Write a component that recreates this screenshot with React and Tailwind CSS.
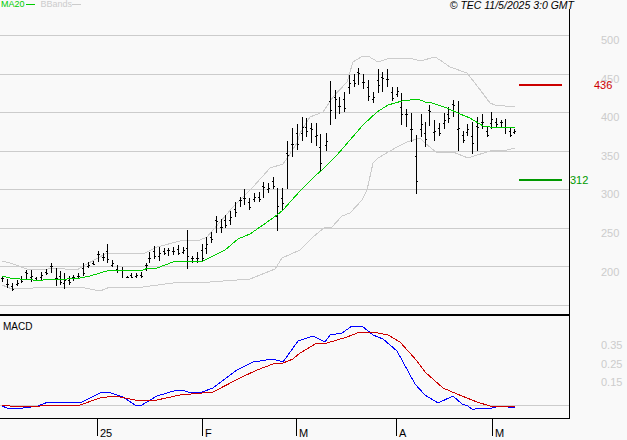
const FONT = "font-['Liberation_Sans',Arial,sans-serif]";

// x, high, low for every daily bar (page pixels)
const bars = [
    [2, 276, 282], [7, 279, 288], [12, 283, 291], [17, 280, 286], [21, 276, 283], [26, 270, 279], [31, 270, 282],
    [36, 277, 281], [41, 272, 280], [46, 269, 275], [51, 263, 273], [56, 268, 286], [60, 271, 285], [64, 273, 289],
    [69, 276, 285], [73, 275, 281], [78, 273, 278], [83, 263, 276], [88, 262, 268], [93, 261, 265], [98, 251, 262],
    [103, 253, 261], [107, 244, 263], [112, 260, 267], [117, 265, 273], [122, 267, 278], [127, 276, 278],
    [131, 273, 278], [136, 273, 278], [141, 272, 278], [146, 263, 271], [149, 252, 263], [154, 246, 259],
    [159, 247, 261], [164, 248, 255], [168, 248, 256], [173, 247, 255], [178, 245, 255], [183, 247, 254],
    [187, 230, 269], [192, 256, 263], [197, 252, 263], [202, 244, 262], [206, 237, 254], [211, 232, 243],
    [216, 216, 233], [221, 219, 233], [225, 215, 228], [230, 211, 225], [235, 202, 217], [240, 197, 207],
    [244, 189, 205], [249, 198, 210], [254, 193, 202], [259, 192, 202], [263, 182, 198], [268, 183, 193],
    [273, 177, 189], [277, 188, 231], [282, 188, 210], [287, 141, 189], [292, 128, 157], [297, 124, 150],
    [302, 117, 141], [306, 118, 137], [311, 123, 143], [316, 123, 146], [320, 134, 171], [326, 133, 151],
    [330, 81, 125], [335, 90, 119], [339, 97, 114], [344, 92, 112], [349, 75, 94], [354, 74, 87], [358, 68, 85],
    [363, 74, 89], [368, 80, 101], [373, 92, 103], [378, 69, 93], [382, 72, 92], [387, 69, 87], [392, 87, 101],
    [397, 87, 97], [401, 93, 125], [406, 109, 127], [411, 113, 142], [416, 135, 194], [421, 114, 137],
    [425, 122, 147], [429, 105, 126], [434, 120, 141], [439, 123, 136], [444, 113, 129], [448, 107, 123],
    [453, 100, 117], [458, 101, 151], [463, 131, 143], [467, 124, 136], [472, 122, 154], [477, 117, 151],
    [482, 114, 129], [487, 127, 137], [491, 112, 129], [496, 118, 127], [501, 120, 127], [505, 119, 134],
    [510, 128, 137], [514, 129, 134],
];

const ma20 = "2,276 10,278 20,279 33,280 43,280 67,279 80,278 90,276 100,273 110,270 143,270 148,268 157,268 173,262 187,261 203,261 213,256 225,250 238,239 250,234 263,225 277,215 283,210 300,191 315,176 322,170 337,155 350,140 363,125 377,112 388,105 402,101 418,99 425,102 432,103 447,108 460,114 470,118 483,126 497,128 503,127 515,127";
const bandUp = "2,261 10,263 27,269 43,270 53,268 77,270 87,264 107,253 123,253 143,254 157,247 180,241 200,240 207,237 233,207 253,187 270,168 283,164 288,157 297,143 300,133 310,117 323,112 333,97 347,82 353,62 363,56 368,56 378,62 390,58 410,58 420,61 435,57 440,60 450,67 467,73 478,87 490,103 495,105 515,107";
const bandLow = "2,285 12,289 33,288 57,287 80,287 100,291 110,287 143,287 180,282 210,282 250,279 275,269 282,258 300,250 313,237 325,227 332,227 342,216 350,213 362,200 367,190 373,163 378,158 397,147 407,142 420,138 425,143 437,153 453,152 468,158 490,151 507,150 515,148";
const macd = "2,407 7,409 23,409 38,407 48,403 80,404 102,393 108,393 123,398 135,406 142,406 157,397 177,391 183,391 190,394 202,393 213,389 237,371 253,363 273,360 283,363 298,342 313,337 325,343 330,336 342,334 352,327 362,327 373,336 383,340 397,352 415,385 425,396 438,404 453,397 462,405 468,407 473,411 477,409 488,410 500,407 515,409";
const signal = "2,406 10,407 40,407 53,406 80,406 100,399 115,397 140,402 157,401 180,396 213,393 240,379 257,371 273,365 283,364 293,360 300,354 317,344 327,344 347,338 360,333 373,333 388,336 400,343 417,362 425,373 443,389 457,395 477,403 490,407 515,408";

const gridLines = [35, 74, 112, 151, 189, 228, 266, 305];
const prices = ["500", "450", "400", "350", "300", "250", "200"];
const macdLabels = ["0.35", "0.25", "0.15"];
const months = [["25", "w-[105px]"], ["F", "w-[94px]"], ["M", "w-[100px]"], ["A", "w-[96px]"], ["M", "w-[60px]"]];

const PriceChart = () => (
    <svg className="block w-[569px] h-[305px]" viewBox="0 9 569 305" shapeRendering="crispEdges">
        {gridLines.map((y) => (
            <line key={y} x1="0" x2="569" y1={y} y2={y} stroke="#cccccc" />
        ))}
        <polyline points={bandUp} fill="none" stroke="#cccccc" />
        <polyline points={bandLow} fill="none" stroke="#cccccc" />
        {bars.map(([x, hi, lo], i) => {
            const open = Math.round(hi + (lo - hi) * (0.25 + ((i * 3) % 5) * 0.1));
            const close = Math.round(hi + (lo - hi) * (0.3 + ((i * 2) % 5) * 0.12));
            return (
                <g key={x} stroke="#000000">
                    <line x1={x + 0.5} x2={x + 0.5} y1={hi} y2={lo} />
                    <line x1={x - 1} x2={x} y1={open + 0.5} y2={open + 0.5} />
                    <line x1={x + 1} x2={x + 2} y1={close + 0.5} y2={close + 0.5} />
                </g>
            );
        })}
        <polyline points={ma20} fill="none" stroke="#00cc00" />
        <line x1="519" x2="562" y1="85" y2="85" stroke="#cc0000" strokeWidth="2" />
        <line x1="519" x2="562" y1="180" y2="180" stroke="#009900" strokeWidth="2" />
    </svg>
);

const MacdChart = () => (
    <svg className="block w-[569px] h-[102px]" viewBox="0 317 569 102" shapeRendering="crispEdges">
        <line x1="0" x2="569" y1="406" y2="406" stroke="#cccccc" />
        <polyline points={macd} fill="none" stroke="#0000ff" />
        <polyline points={signal} fill="none" stroke="#cc0000" />
    </svg>
);

export default function App() {
    return (
        <div className={`w-[627px] h-[440px] bg-[#f9f9f9] overflow-hidden ${FONT}`}>
            {/* legend and copyright */}
            <div className="h-[9px] flex items-start justify-between pl-px pr-[53px] whitespace-nowrap">
                <div className="flex items-center h-[9px] text-[9px] leading-[9px]">
                    <span className="text-[#00cc00]">MA20</span>
                    <span className="w-[9px] h-px ml-px bg-[#00cc00]"></span>
                    <span className="ml-[6px] text-[#cccccc]">BBands</span>
                    <span className="w-[9px] h-px bg-[#cccccc]"></span>
                </div>
                <span className="text-[10.5px] leading-[10px] italic text-black">© TEC 11/5/2025 3:0 GMT</span>
            </div>

            <div className="flex">
                <div className="w-[570px] border-r border-black">
                    <PriceChart />
                    <div className="h-[2px] bg-black"></div>
                    <div className="relative">
                        <span className="absolute left-[3px] top-[5px] text-[10px] leading-[12px] text-black">MACD</span>
                        <MacdChart />
                    </div>
                    <div className="h-px bg-black"></div>
                </div>

                {/* right axis */}
                <div className="relative flex-1 pl-[31px] pt-[12px] text-[11px] text-[#cccccc]">
                    {prices.map((p) => (
                        <div key={p} className="h-[38.6px] flex items-center">{p}</div>
                    ))}
                    <div className="mt-[45px]">
                        {macdLabels.map((m) => (
                            <div key={m} className="h-[18.5px] flex items-center">{m}</div>
                        ))}
                    </div>
                    <span className="absolute left-[24px] top-[69px] leading-[14px] text-[#cc0000]">436</span>
                    <span className="absolute left-0 top-[164px] leading-[14px] text-[#009900]">312</span>
                </div>
            </div>

            {/* month ticks */}
            <div className="flex pl-[97px] h-[20px] text-[11px] text-black">
                {months.map(([label, width], i) => (
                    <div key={i} className={`flex ${width}`}>
                        <span className="w-px h-[17px] bg-black"></span>
                        <span className="self-end pl-[2px] leading-[12px]">{label}</span>
                    </div>
                ))}
            </div>
        </div>
    );
}
